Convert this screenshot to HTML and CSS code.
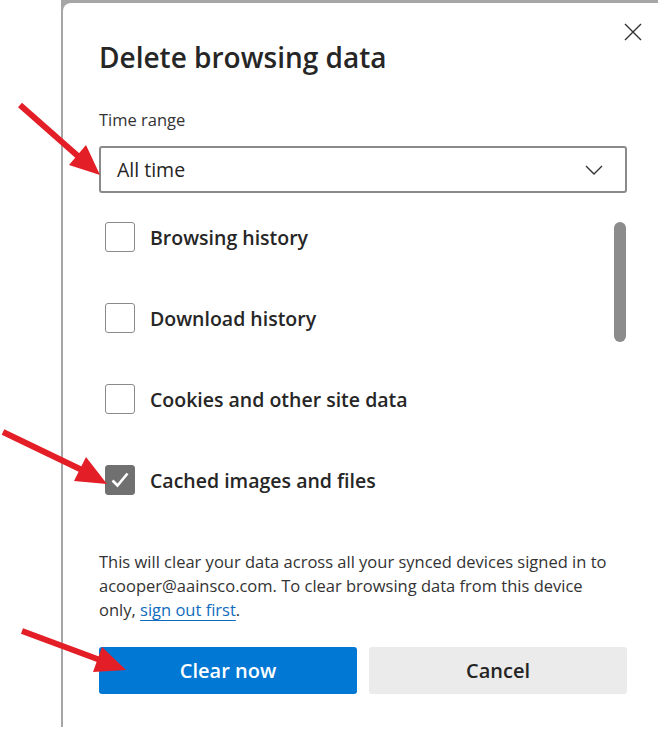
FILE: index.html
```html
<!DOCTYPE html>
<html>
  <head>
    <title>Delete browsing data</title>
    <link rel="stylesheet" href="styles.css">
  </head>
  <body>
    <div class="page">
      <div class="frame">
        <div class="dialog">
          <div class="dialog-header">
            <h1>Delete browsing data</h1>
            <button class="close" aria-label="Close">
              <svg width="18" height="18" viewBox="0 0 18 18">
                <path d="M1 1 L17 17 M17 1 L1 17" stroke="#333" stroke-width="1.4" fill="none" />
              </svg>
            </button>
          </div>

          <div class="field-label">Time range</div>
          <div class="select">
            <span>All time</span>
            <svg width="18" height="10" viewBox="0 0 18 10">
              <path d="M1 1 L9 9 L17 1" stroke="#333" stroke-width="1.4" fill="none" />
            </svg>
          </div>

          <div class="list">
            <div class="items">
              <label class="item"><span class="box"></span>Browsing history</label>
              <label class="item"><span class="box"></span>Download history</label>
              <label class="item"><span class="box"></span>Cookies and other site data</label>
              <label class="item">
                <span class="box checked">
                  <svg width="26" height="26" viewBox="0 0 26 26">
                    <path d="M5.5 13.5 L10.5 18.5 L20.5 6.5" stroke="#fff" stroke-width="2.6" fill="none" />
                  </svg>
                </span>
                Cached images and files
              </label>
            </div>
            <div class="scrollbar"><div class="thumb"></div></div>
          </div>

          <p class="note">
            This will clear your data across all your synced devices signed in to
            acooper@aainsco.com. To clear browsing data from this device
            only, <a href="#">sign out first</a>.
          </p>

          <div class="actions">
            <button class="btn primary">Clear now</button>
            <button class="btn secondary">Cancel</button>
          </div>
        </div>
      </div>

      <!-- annotation arrows -->
      <svg class="arrows" width="658" height="729" viewBox="0 0 658 729">
        <g fill="#e41e26" stroke="#e41e26">
          <line x1="20" y1="105" x2="79" y2="157" stroke-width="6" />
          <polygon points="100,175 69,165 86,145" stroke="none" />
          <line x1="3" y1="432" x2="82" y2="470" stroke-width="6" />
          <polygon points="107,484 74,481 86,457" stroke="none" />
          <line x1="22" y1="631" x2="100" y2="660" stroke-width="6" />
          <polygon points="126,670 93,672 102,647" stroke="none" />
        </g>
      </svg>
    </div>
  </body>
</html>
```

FILE: styles.css
```css
body {
  margin: 0;
  background: #fff;
  font-family: "Open Sans", "Noto Sans", sans-serif;
  color: #242424;
}
.page {
  position: relative;
  width: 658px;
  height: 729px;
  overflow: hidden;
}
.frame {
  margin-left: 61px;
  height: 727px;
  padding: 3px 0 0 2px;
  box-sizing: border-box;
  background: #a6a6a6;
}
.dialog {
  height: 100%;
  background: #fff;
  border-top-left-radius: 8px;
  padding: 11px 31px 0 36px;
  box-sizing: border-box;
}
.dialog-header {
  display: flex;
  justify-content: space-between;
  align-items: flex-start;
}
.dialog-header h1 {
  margin: 23px 0 0;
  font-size: 28px;
  line-height: 40px;
  font-weight: 600;
  color: #262626;
}
.close {
  width: 36px;
  height: 36px;
  margin-right: -24px;
  padding: 0;
  border: none;
  background: none;
  display: flex;
  align-items: center;
  justify-content: center;
}
.field-label {
  margin-top: 31px;
  font-size: 16.5px;
  line-height: 24px;
  color: #333;
}
.select {
  margin-top: 14px;
  height: 47px;
  box-sizing: border-box;
  border: 2px solid #8a8a8a;
  border-radius: 3px;
  display: flex;
  align-items: center;
  justify-content: space-between;
  padding: 0 22px 0 16px;
  font-size: 19.5px;
  color: #242424;
}
.list {
  margin-top: 29px;
  display: flex;
  justify-content: space-between;
}
.items {
  display: flex;
  flex-direction: column;
  gap: 51px;
  padding-left: 6px;
}
.item {
  display: flex;
  align-items: center;
  gap: 15px;
  height: 30px;
  font-size: 19.5px;
  font-weight: 600;
  color: #262626;
}
.box {
  width: 30px;
  height: 30px;
  box-sizing: border-box;
  border: 1px solid #8a8a8a;
  border-radius: 3px;
  display: flex;
  align-items: center;
  justify-content: center;
}
.box.checked {
  background: #707070;
  border-color: #707070;
}
.scrollbar {
  width: 12px;
  margin-right: 1px;
}
.thumb {
  height: 120px;
  border-radius: 6px;
  background: #8c8c8c;
}
.note {
  margin: 55px 0 0;
  max-width: 515px;
  font-size: 16.5px;
  line-height: 24px;
  color: #333;
}
.note a {
  color: #0f6cbd;
  text-decoration: underline;
  text-decoration-thickness: 1px;
  text-underline-offset: 4px;
}
.actions {
  margin-top: 25px;
  display: grid;
  grid-template-columns: 1fr 1fr;
  gap: 12px;
}
.btn {
  height: 47px;
  border: none;
  border-radius: 3px;
  font-family: inherit;
  font-size: 20px;
  font-weight: 600;
}
.btn.primary {
  background: #0078d4;
  color: #fff;
}
.btn.secondary {
  background: #ebebeb;
  color: #242424;
}
.arrows {
  position: absolute;
  top: 0;
  left: 0;
  pointer-events: none;
}
```
